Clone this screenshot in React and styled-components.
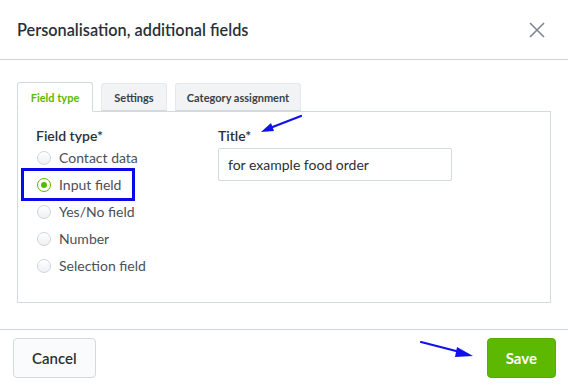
import React from "react";
import styled, { createGlobalStyle } from "styled-components";

const Global = createGlobalStyle`
  html, body { margin: 0; padding: 0; background: #fff; }
  body { font-family: "Source Sans Pro", Lato, "Noto Sans", sans-serif; color: #2b3036; }
  * { box-sizing: border-box; }
`;

const Dialog = styled.div`
  position: relative;
  width: 568px;
  height: 386px;
  display: flex;
  flex-direction: column;
`;

const Header = styled.div`
  height: 60px;
  border-bottom: 1px solid #ccd3da;
  display: flex;
  align-items: center;
  justify-content: space-between;
  padding: 0 22px 0 17px;
`;

const Title = styled.h1`
  margin: 0;
  font-size: 16.3px;
  font-weight: 600;
  color: #2b3036;
`;

const CloseButton = styled.button`
  border: 0;
  background: none;
  padding: 0;
  width: 18px;
  height: 18px;
  display: flex;
  align-items: center;
  justify-content: center;
  cursor: pointer;
`;

const Body = styled.div`
  padding: 22px 17px 0 17px;
  height: 269px;
`;

const Tabs = styled.div`
  display: flex;
  gap: 8px;
  height: 29px;
  align-items: flex-end;
`;

const Tab = styled.div`
  height: ${(p) => (p.$active ? "30px" : "28px")};
  margin-bottom: ${(p) => (p.$active ? "-1px" : "0")};
  width: ${(p) => p.$w}px;
  display: flex;
  align-items: center;
  justify-content: center;
  font-size: 11px;
  font-weight: 700;
  color: ${(p) => (p.$active ? "#5cb800" : "#3a3f45")};
  background: ${(p) => (p.$active ? "#fff" : "#f2f3f5")};
  border: 1px solid ${(p) => (p.$active ? "#d3d9df" : "#e6e9ec")};
  border-bottom: ${(p) => (p.$active ? "1px solid #fff" : "1px solid #d3d9df")};
  border-radius: 3px 3px 0 0;
  position: relative;
  z-index: 1;
`;

const Panel = styled.div`
  border: 1px solid #d3d9df;
  height: 192px;
  padding: 15px 0 0 18px;
  display: grid;
  grid-template-columns: 182px 234px;
`;

const Column = styled.div`
  display: flex;
  flex-direction: column;
`;

const Label = styled.div`
  font-size: 14px;
  font-weight: 600;
  color: #2b3036;
  height: 17px;
  line-height: 17px;
`;

const RadioRow = styled.label`
  display: flex;
  align-items: center;
  height: 27px;
  gap: 8px;
  font-size: 14px;
  color: #4a5058;
  padding-left: 1px;
`;

const RadioCircle = styled.span`
  width: 14px;
  height: 14px;
  border-radius: 50%;
  border: 1px solid ${(p) => (p.$checked ? "#5cb800" : "#cfd5db")};
  background: ${(p) => (p.$checked ? "#fff" : "linear-gradient(#fff, #eef0f2)")};
  display: flex;
  align-items: center;
  justify-content: center;
  flex: none;
  &::after {
    content: "";
    width: 6px;
    height: 6px;
    border-radius: 50%;
    background: ${(p) => (p.$checked ? "#5cb800" : "transparent")};
  }
`;

const Input = styled.input`
  margin-top: 4px;
  width: 234px;
  height: 33px;
  border: 1px solid #d3d9df;
  border-radius: 2px;
  padding: 0 9px;
  font-family: inherit;
  font-size: 14px;
  color: #2b3036;
  outline: none;
  &::placeholder { color: #2b3036; }
`;

const Footer = styled.div`
  border-top: 1px solid #ccd3da;
  flex: 1;
  display: flex;
  align-items: center;
  justify-content: space-between;
  padding: 0 12px 0 13px;
`;

const Button = styled.button`
  height: 40px;
  padding: 0 ${(p) => p.$pad}px;
  border-radius: 4px;
  font-family: inherit;
  font-size: 15px;
  font-weight: ${(p) => (p.$primary ? 700 : 600)};
  color: ${(p) => (p.$primary ? "#fff" : "#2b3036")};
  background: ${(p) => (p.$primary ? "#5cb800" : "#fafbfc")};
  border: 1px solid ${(p) => (p.$primary ? "#57ad00" : "#d3d9df")};
  cursor: pointer;
`;

const Highlight = styled.div`
  position: absolute;
  left: 21px;
  top: 168px;
  width: 114px;
  height: 33px;
  border: 3px solid #0a0ae6;
  pointer-events: none;
`;

const Arrow = styled.svg`
  position: absolute;
  left: ${(p) => p.$x}px;
  top: ${(p) => p.$y}px;
  pointer-events: none;
`;

const options = ["Contact data", "Input field", "Yes/No field", "Number", "Selection field"];

export default function App() {
  return (
    <>
      <Global />
      <Dialog>
        <Header>
          <Title>Personalisation, additional fields</Title>
          <CloseButton aria-label="Close">
            <svg width="16" height="16" viewBox="0 0 16 16">
              <path d="M1 1 L15 15 M15 1 L1 15" stroke="#7b8794" strokeWidth="1.6" fill="none" />
            </svg>
          </CloseButton>
        </Header>
        <Body>
          <Tabs>
            <Tab $active $w={76}>Field type</Tab>
            <Tab $w={66}>Settings</Tab>
            <Tab $w={126}>Category assignment</Tab>
          </Tabs>
          <Panel>
            <Column>
              <Label>Field type*</Label>
              {options.map((o, i) => (
                <RadioRow key={o}>
                  <RadioCircle $checked={i === 1} />
                  {o}
                </RadioRow>
              ))}
            </Column>
            <Column>
              <Label>Title*</Label>
              <Input placeholder="for example food order" />
            </Column>
          </Panel>
        </Body>
        <Footer>
          <Button $pad={18}>Cancel</Button>
          <Button $primary $pad={18}>Save</Button>
        </Footer>
        <Highlight />
        <Arrow $x={258} $y={114} width="46" height="22" viewBox="0 0 46 22">
          <path d="M43 2 L12 14" stroke="#1010e8" strokeWidth="2.2" strokeLinecap="round" />
          <path d="M3 18 L13 9 L16 17 Z" fill="#1010e8" />
        </Arrow>
        <Arrow $x={418} $y={338} width="58" height="24" viewBox="0 0 58 24">
          <path d="M3 4 L42 14" stroke="#1010e8" strokeWidth="2.2" strokeLinecap="round" />
          <path d="M55 18 L39 9 L37 19 Z" fill="#1010e8" />
        </Arrow>
      </Dialog>
    </>
  );
}
